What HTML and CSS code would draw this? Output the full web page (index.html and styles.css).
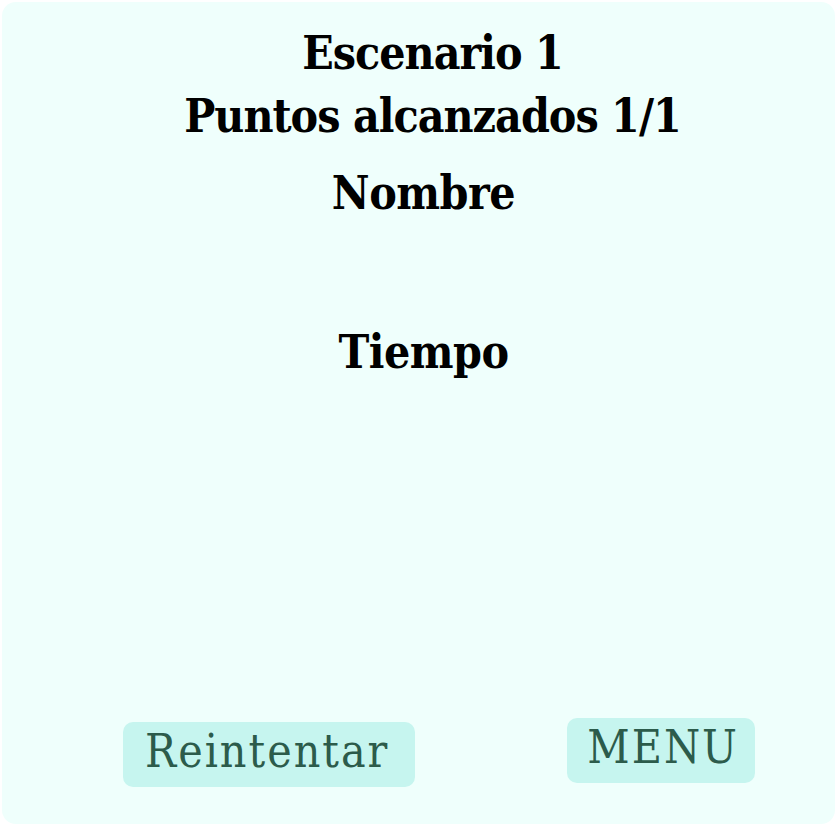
FILE: index.html
```html
<!DOCTYPE html>
<html>
<head>
<meta charset="utf-8">
<link rel="stylesheet" href="styles.css">
</head>
<body>
<div class="card">
  <div class="head">
    <h1 class="title">Escenario 1</h1>
    <h1 class="title">Puntos alcanzados 1/1</h1>
    <h2 class="label name">Nombre</h2>
    <h2 class="label time">Tiempo</h2>
  </div>
  <div class="actions">
    <button class="btn retry">Reintentar</button>
    <button class="btn menu">MENU</button>
  </div>
</div>
</body>
</html>
```
FILE: styles.css
```css
html, body {
  margin: 0;
  padding: 0;
  background: #ffffff;
}
body {
  width: 837px;
  height: 826px;
  padding: 2px;
  box-sizing: border-box;
}
.card {
  height: 100%;
  box-sizing: border-box;
  background: #effffc;
  border-radius: 14px;
  display: flex;
  flex-direction: column;
  justify-content: space-between;
  font-family: "DejaVu Serif Condensed", "DejaVu Serif", serif;
}
.head {
  display: flex;
  flex-direction: column;
  align-items: center;
  padding-top: 20px;
}
.title, .label {
  margin: 0;
  font-weight: bold;
  color: #000;
  font-size: 46px;
  line-height: 63px;
  letter-spacing: -1px;
}
.title {
  padding-left: 28px;
}
.label {
  padding-left: 10px;
  letter-spacing: -0.5px;
}
.name {
  margin-top: 14px;
}
.time {
  margin-top: 96px;
}
.actions {
  display: flex;
  justify-content: space-between;
  padding: 0 80px 37px 121px;
  align-items: flex-end;
}
.btn {
  border: none;
  background: #c6f5ef;
  color: #2c5b4b;
  font-family: "DejaVu Serif Condensed", "DejaVu Serif", serif;
  font-size: 46px;
  letter-spacing: 2px;
  line-height: 58px;
  height: 65px;
  box-sizing: border-box;
  border-radius: 10px;
  padding: 0 26px 7px 22px;
}
.menu {
  margin-bottom: 4px;
  padding: 0 16px 7px 20px;
}
```
